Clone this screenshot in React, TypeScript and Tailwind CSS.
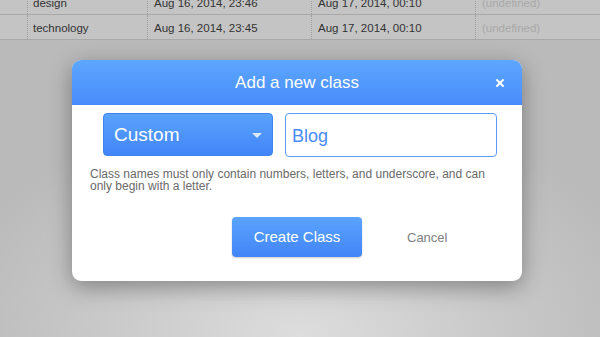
import { X } from "lucide-react"

const rows = [
  { name: "design", created: "Aug 16, 2014, 23:46", updated: "Aug 17, 2014, 00:10" },
  { name: "technology", created: "Aug 16, 2014, 23:45", updated: "Aug 17, 2014, 00:10" },
]

export default function App() {
  return (
    <div className="relative w-[600px] h-[337px] overflow-hidden bg-[radial-gradient(ellipse_60%_70%_at_50%_100%,#dddddd_0%,#c9c9c9_55%,#bababa_100%)] font-['Liberation_Sans',Arial,sans-serif]">
      {/* table behind the dialog */}
      <div className="-mt-[10px] bg-[#c4c4c4]">
        {rows.map((r) => (
          <div key={r.name} className="flex h-[25px] border-b border-[#a9a9a9] text-[11.5px] text-[#333]">
            <div className="w-[28px] border-r border-dotted border-[#a0a0a0]" />
            <div className="w-[120px] flex items-center pt-[3px] pl-[5px] border-r border-dotted border-[#a0a0a0]">{r.name}</div>
            <div className="w-[164px] flex items-center pt-[3px] pl-[6px] border-r border-dotted border-[#a0a0a0]">{r.created}</div>
            <div className="w-[164px] flex items-center pt-[3px] pl-[6px] border-r border-dotted border-[#a0a0a0]">{r.updated}</div>
            <div className="flex-1 flex items-center pt-[3px] pl-[6px] text-[#a9a9a9] whitespace-nowrap overflow-hidden">(undefined)</div>
          </div>
        ))}
      </div>

      {/* dialog */}
      <div className="absolute inset-0 pt-[60px] pl-[72px]">
        <div className="w-[450px] h-[221px] rounded-[9px] bg-white overflow-hidden shadow-[0_6px_22px_rgba(0,0,0,0.35)]">
          <div className="relative h-[45px] flex items-center justify-center bg-gradient-to-b from-[#5ea7fe] to-[#488cfb] text-white text-[17px]">
            Add a new class
            <X className="absolute right-[16px] top-[17px] w-[12px] h-[12px]" strokeWidth={4} />
          </div>

          <div className="pl-[31px] pr-[25px] pt-[8px] flex gap-[12px]">
            <div className="w-[170px] h-[43px] rounded-[4px] border border-[#3f82ee] bg-gradient-to-b from-[#5aa3fd] to-[#4285f7] flex items-center justify-between pt-[2px] pl-[10px] pr-[10px] text-white text-[19px]">
              <span>Custom</span>
              <span className="w-0 h-0 border-l-[5px] border-r-[5px] border-t-[5px] border-l-transparent border-r-transparent border-t-[#dbe8ff]" />
            </div>
            <div className="w-[212px] h-[44px] rounded-[4px] border-[1.5px] border-[#5b9bf6] flex items-center pt-[2px] pl-[6px] text-[#4a8cf7] text-[18px]">
              Blog
            </div>
          </div>

          <p className="w-[420px] pl-[18px] pt-[11px] text-[12px] leading-[12px] text-[#6a6a6a]">
            Class names must only contain numbers, letters, and underscore, and can only begin with a letter.
          </p>

          <div className="flex items-center pt-[25px] pl-[160px]">
            <div className="w-[130px] h-[40px] rounded-[4px] bg-gradient-to-b from-[#5aa3fd] to-[#4285f7] shadow-[0_1px_2px_rgba(0,0,0,0.2)] flex items-center justify-center text-white text-[15px]">
              Create Class
            </div>
            <div className="ml-[45px] mt-[2px] text-[13px] text-[#808080]">Cancel</div>
          </div>
        </div>
      </div>
    </div>
  )
}
